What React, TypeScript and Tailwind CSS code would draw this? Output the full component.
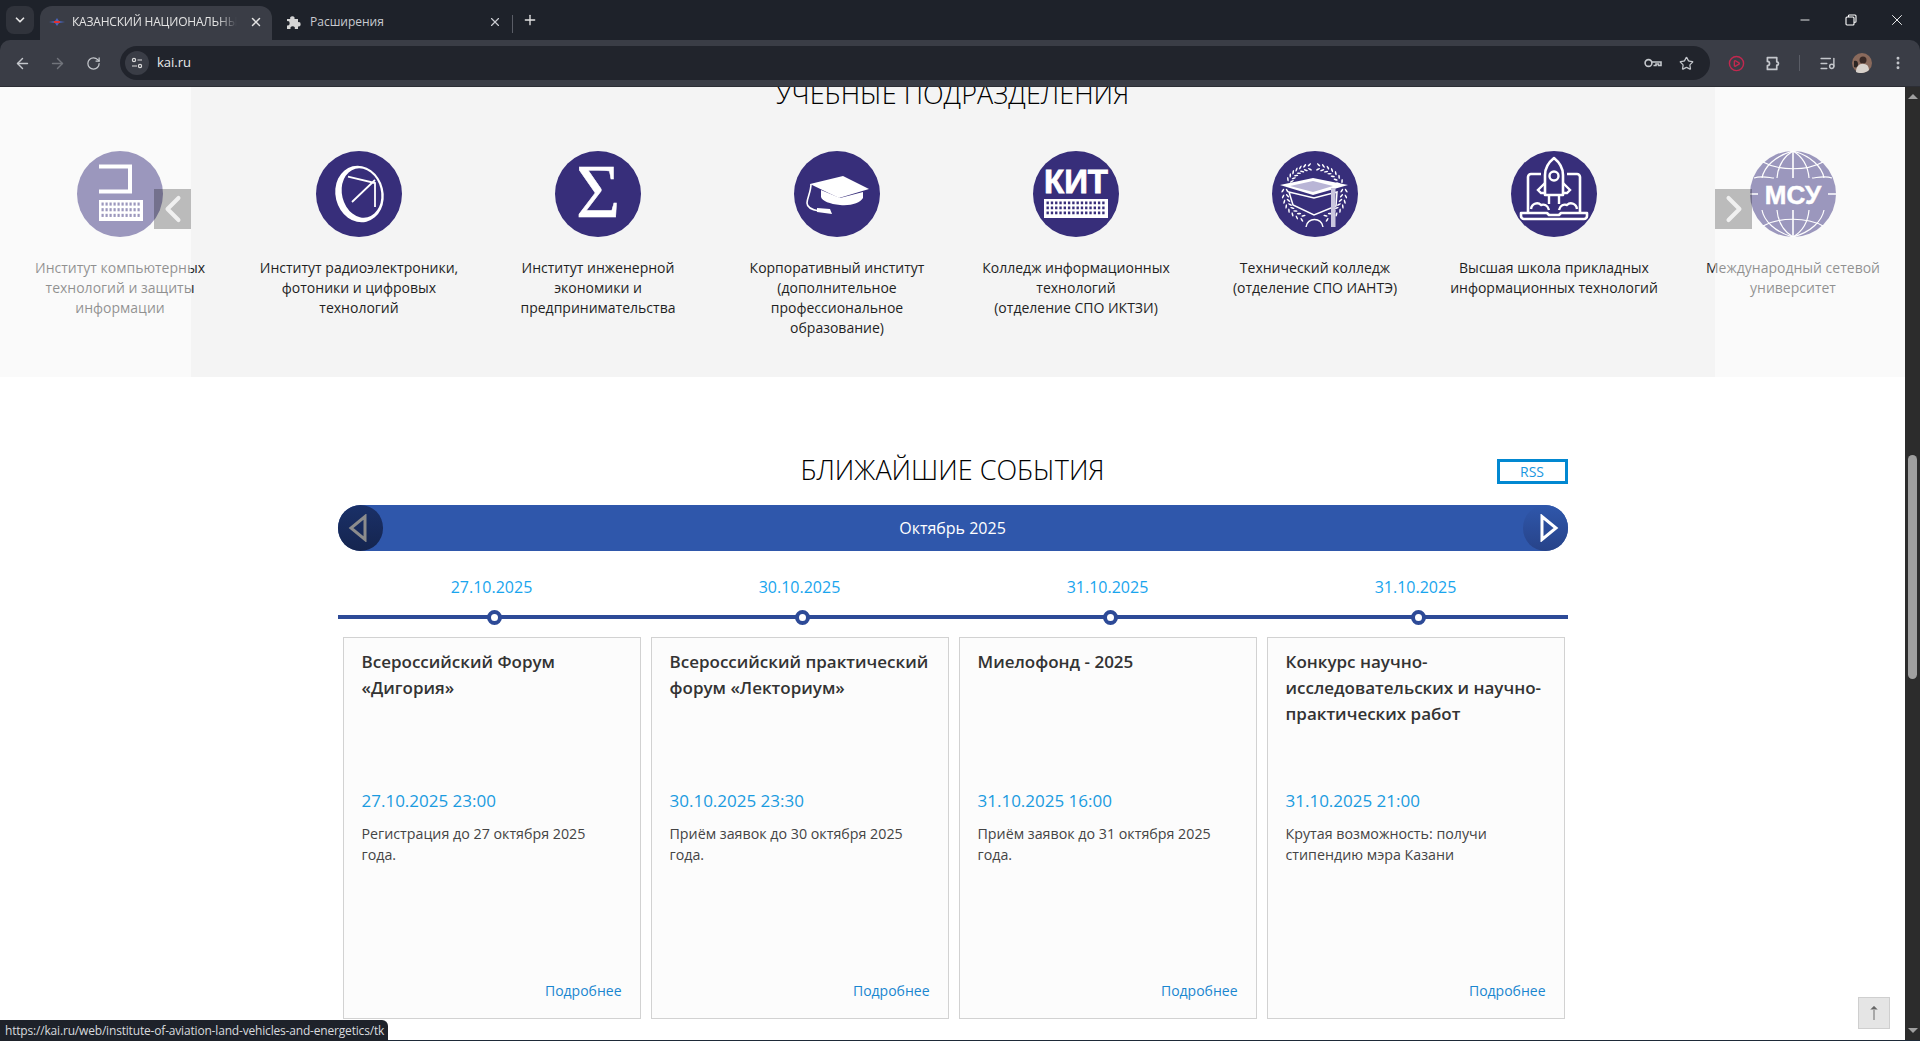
import React from "react";
import {
  ArrowLeft,
  ArrowRight,
  ChevronDown,
  ChevronLeft,
  ChevronRight,
  CirclePlay,
  EllipsisVertical,
  ListMusic,
  Minus,
  Plus,
  RotateCw,
  Star,
  X,
} from "lucide-react";

function KeyboardGrid({ x, y, w, h, rows, cols }: { x: number; y: number; w: number; h: number; rows: number; cols: number }) {
  const cells = [];
  const cw = (w - 4) / cols;
  const ch = (h - 4) / rows;
  for (let r = 0; r < rows; r++) {
    for (let c = 0; c < cols; c++) {
      cells.push(<rect key={`${r}-${c}`} x={x + 2.5 + c * cw} y={y + 2.5 + r * ch} width={cw * 0.55} height={ch * 0.55} fill="#372e7a" />);
    }
  }
  return (
    <g>
      <rect x={x} y={y} width={w} height={h} fill="#fff" />
      {cells}
    </g>
  );
}

// leaves of the wreath, set in pairs along a curve
function Leaves({ from, ctrl, to, n }: { from: number[]; ctrl: number[]; to: number[]; n: number }) {
  const items = [];
  for (let i = 0; i <= n; i++) {
    const t = i / n;
    const u = 1 - t;
    const px = u * u * from[0] + 2 * u * t * ctrl[0] + t * t * to[0];
    const py = u * u * from[1] + 2 * u * t * ctrl[1] + t * t * to[1];
    const dx = 2 * u * (ctrl[0] - from[0]) + 2 * t * (to[0] - ctrl[0]);
    const dy = 2 * u * (ctrl[1] - from[1]) + 2 * t * (to[1] - ctrl[1]);
    const angle = (Math.atan2(dy, dx) * 180) / Math.PI;
    items.push(
      <g key={i} transform={`translate(${px} ${py}) rotate(${angle})`}>
        <ellipse cx="1" cy="-2" rx="2.2" ry="0.8" transform="rotate(-35)" fill="#fff" />
        <ellipse cx="1" cy="2" rx="2.2" ry="0.8" transform="rotate(35)" fill="#fff" />
      </g>
    );
  }
  return <g>{items}</g>;
}

function Circle({ children }: { children: React.ReactNode }) {
  return (
    <svg width="86" height="86" viewBox="0 0 86 86" className="mx-auto block">
      <circle cx="43" cy="43" r="43" fill="#372e7a" />
      {children}
    </svg>
  );
}

const icons: React.ReactNode[] = [
  <Circle key="a">
    <path d="M22 15.5h31v25H22" fill="none" stroke="#fff" strokeWidth="4" />
    <KeyboardGrid x={22} y={49} w={44} h={21} rows={3} cols={10} />
  </Circle>,
  <Circle key="b">
    <ellipse cx="43.5" cy="43" rx="24" ry="28.5" transform="rotate(-14 43.5 43)" fill="#fff" />
    <ellipse cx="45.5" cy="42" rx="19.5" ry="25" transform="rotate(-14 45.5 42)" fill="#372e7a" />
    <path d="M32 25.500l27 6.500v24M36 51l23-22" fill="none" stroke="#fff" strokeWidth="1.8" />
  </Circle>,
  <Circle key="c">
    <text x="43" y="66" textAnchor="middle" fontFamily="'Liberation Serif', serif" fontSize="76" fill="#fff" stroke="#fff" strokeWidth="0.5">Σ</text>
  </Circle>,
  <Circle key="d">
    <path d="M16 33l33-8 26 13-30 9z" fill="#fff" />
    <path d="M27 39l19 8 23-6v6c-3 5-12 8-23 7-10-1-18-4-19-8z" fill="#fff" />
    <path d="M17 33c0 8-4 14-4 19 0 5 6 7 12 8" fill="none" stroke="#fff" strokeWidth="1.6" />
    <path d="M23 57l13 1 2 5-15-2z" fill="#fff" />
  </Circle>,
  <Circle key="e">
    <text x="43" y="42" textAnchor="middle" fontFamily="'Liberation Sans', sans-serif" fontWeight="700" fontSize="33" fill="#fff" stroke="#fff" strokeWidth="0.8">КИТ</text>
    <KeyboardGrid x={11} y={48} w={64} h={19} rows={3} cols={14} />
  </Circle>,
  <Circle key="f">
    <Leaves from={[18, 29]} ctrl={[24, 18]} to={[38, 16]} n={6} />
    <Leaves from={[68, 31]} ctrl={[60, 18]} to={[46, 16]} n={6} />
    <Leaves from={[13, 40]} ctrl={[13, 60]} to={[31, 67]} n={7} />
    <Leaves from={[72, 40]} ctrl={[72, 60]} to={[54, 67]} n={7} />
    <path d="M8 34l33-7 35 7-35 10z" fill="#fff" />
    <path d="M18 35l23-5 20 5-20 6z" fill="#b9b5d6" />
    <path d="M17 41l4 13 21 10 22-9 1-14-23 6z" fill="#372e7a" stroke="#fff" strokeWidth="1.5" />
    <rect x="59" y="37" width="4.500" height="39" fill="#c9c6de" />
    <path d="M34 76c1-10 16-10 17 0" fill="none" stroke="#fff" strokeWidth="1.4" />
  </Circle>,
  <Circle key="g">
    <path d="M30 23H20a3 3 0 0 0-3 3v37M56 23h10a3 3 0 0 1 3 3v37" fill="none" stroke="#fff" strokeWidth="2.6" />
    <path d="M10 62h26l2 2h10l2-2h26v3a3 3 0 0 1-3 3H13a3 3 0 0 1-3-3z" fill="none" stroke="#fff" strokeWidth="2.6" strokeLinejoin="round" />
    <path d="M43 7c5 4 9 9 9 17v20H34V24c0-8 4-13 9-17z" fill="#372e7a" stroke="#fff" strokeWidth="2.6" strokeLinejoin="round" />
    <circle cx="43" cy="25" r="4.5" fill="none" stroke="#fff" strokeWidth="2.4" />
    <path d="M34 32l-7 7 3 3h4M52 32l7 7-3 3h-4M38 45v8M48 45v8" fill="none" stroke="#fff" strokeWidth="2.4" />
    <path d="M20 58c1-6 7-7 10-4 3-1 7 0 8 5M66 58c-1-6-7-7-10-4-3-1-7 0-8 5" fill="none" stroke="#fff" strokeWidth="2.4" />
  </Circle>,
  <Circle key="h">
    <g fill="none" stroke="#fff" strokeWidth="1.2">
      <path d="M43 0v27M43 59v27M0 43h8M78 43h8" strokeWidth="1.6" />
      <path d="M43 0c-10 6-15 15-16 27M43 0c10 6 15 15 16 27M43 86c-10-6-15-15-16-27M43 86c10-6 15-15 16-27" />
      <path d="M43 0C25 5 14 16 12 27M43 0c18 5 29 16 31 27M43 86C25 81 14 70 12 59M43 86c18-5 29-16 31-27" />
      <path d="M13 11c16 9 44 9 60 0M13 75c16-9 44-9 60 0" />
      <path d="M4 27c8-3 16 0 20 0M82 27c-8-3-16 0-20 0" />
    </g>
    <text x="43" y="53" textAnchor="middle" fontFamily="'Liberation Sans', sans-serif" fontWeight="700" fontSize="26" fill="#fff" stroke="#fff" strokeWidth="0.5">МСУ</text>
  </Circle>,
];

const units = [
  ["Институт компьютерных", "технологий и защиты", "информации"],
  ["Институт радиоэлектроники,", "фотоники и цифровых", "технологий"],
  ["Институт инженерной", "экономики и", "предпринимательства"],
  ["Корпоративный институт", "(дополнительное", "профессиональное", "образование)"],
  ["Колледж информационных", "технологий", "(отделение СПО ИКТЗИ)"],
  ["Технический колледж", "(отделение СПО ИАНТЭ)"],
  ["Высшая школа прикладных", "информационных технологий"],
  ["Международный сетевой", "университет"],
];

const events = [
  {
    day: "27.10.2025",
    title: ["Всероссийский Форум", "«Дигория»"],
    date: "27.10.2025 23:00",
    text: ["Регистрация до 27 октября 2025", "года."],
  },
  {
    day: "30.10.2025",
    title: ["Всероссийский практический", "форум «Лекториум»"],
    date: "30.10.2025 23:30",
    text: ["Приём заявок до 30 октября 2025", "года."],
  },
  {
    day: "31.10.2025",
    title: ["Миелофонд - 2025"],
    date: "31.10.2025 16:00",
    text: ["Приём заявок до 31 октября 2025", "года."],
  },
  {
    day: "31.10.2025",
    title: ["Конкурс научно-", "исследовательских и научно-", "практических работ"],
    date: "31.10.2025 21:00",
    text: ["Крутая возможность: получи", "стипендию мэра Казани"],
  },
];

function BrowserChrome() {
  return (
    <div className="h-[87px] shrink-0 bg-[#1e222a] text-[#e3e3e3] font-['Open_Sans',sans-serif]">
      <div className="flex h-10 items-end pl-[6px]">
        <div className="mb-[6px] flex h-7 w-[28px] items-center justify-center rounded-lg bg-[#30333b]">
          <ChevronDown size={14} strokeWidth={3} />
        </div>
        <div className="ml-[6px] flex h-[34px] w-[232px] items-center rounded-t-xl bg-[#3a3d46] pb-[2px] pl-[9px] pr-[9px]">
          <svg width="16" height="8" viewBox="0 0 16 8" className="shrink-0">
            <path d="M0 4l6-1 2-3 2 3 6 1-6 1-2 3-2-3z" fill="#4a63b8" />
            <path d="M5 4h6" stroke="#d33" strokeWidth="2" />
          </svg>
          <div className="ml-[7px] w-[165px] overflow-hidden whitespace-nowrap text-[12px] tracking-[-0.2px] [mask-image:linear-gradient(to_right,black_88%,transparent)]">
            КАЗАНСКИЙ НАЦИОНАЛЬНЫЙ
          </div>
          <X size={14} strokeWidth={2.5} className="ml-auto" />
        </div>
        <div className="flex h-[34px] w-[240px] items-center pb-[2px] pl-[14px] pr-[10px]">
          <svg width="15" height="15" viewBox="0 0 15 15" fill="#d5d5d5">
            <path d="M1 4h3.2a2.2 2.2 0 1 1 4.3 0H12v3.2a2.2 2.2 0 1 1 0 4.3V14H8.8a2.2 2.2 0 1 0-4.3 0H1v-3.500a2.2 2.2 0 1 0 0-4.3z" />
          </svg>
          <span className="ml-[9px] text-[12px] text-[#c9cbd0]">Расширения</span>
          <X size={14} strokeWidth={2} className="ml-auto text-[#c9cbd0]" />
        </div>
        <div className="mb-[7px] h-[18px] w-px bg-[#5a5d66]" />
        <Plus size={16} strokeWidth={2} className="mb-[12px] ml-[9px]" />
        <div className="ml-auto flex h-10 items-center text-white">
          <Minus size={14} strokeWidth={1.5} className="mr-[33px]" />
          <svg width="12" height="12" viewBox="0 0 12 12" className="mr-[31px]" fill="none" stroke="currentColor" strokeWidth="1.1">
            <rect x="1" y="3" width="8" height="8" rx="1" />
            <path d="M3.5 3V1.5a.8.8 0 0 1 .8-.5H10a1 1 0 0 1 1 1v5.5a.8.8 0 0 1-.8.8H9" />
          </svg>
          <X size={18} strokeWidth={1.2} className="mr-[14px]" />
        </div>
      </div>
      <div className="flex h-[47px] items-center rounded-t-[10px] border-b border-[#2c2e35] bg-[#3a3d46]">
        <ArrowLeft size={17} strokeWidth={2} className="ml-[14px] text-[#c4c7cc]" />
        <ArrowRight size={17} strokeWidth={2} className="ml-[18px] text-[#71747b]" />
        <RotateCw size={15} strokeWidth={2} className="ml-[20px] text-[#c4c7cc]" />
        <div className="ml-[19px] flex h-[34px] w-[1590px] items-center rounded-full bg-[#21242c] pl-[5px] pr-[16px]">
          <div className="flex h-6 w-6 items-center justify-center rounded-full bg-[#3a3d46]">
            <svg width="12" height="12" viewBox="0 0 12 12" fill="none" stroke="#dcdcdc" strokeWidth="1.2">
              <circle cx="3" cy="3" r="1.6" />
              <path d="M6.5 3H11M1 9h5" />
              <circle cx="9" cy="9" r="1.6" />
            </svg>
          </div>
          <span className="ml-[8px] text-[13px] text-[#e8eaed]">kai.ru</span>
          <svg width="18" height="10" viewBox="0 0 18 10" className="ml-auto" fill="none" stroke="#c4c7cc" strokeWidth="1.6">
            <circle cx="4.5" cy="5" r="3.4" />
            <path d="M8 4h9v3.5h-2.5V6H12v1.5H9.5" />
          </svg>
          <Star size={15} strokeWidth={2} className="ml-[17px] text-[#c4c7cc]" />
        </div>
        <CirclePlay size={17} strokeWidth={2} className="ml-[18px] text-[#c2284f]" />
        <svg width="17" height="17" viewBox="0 0 20 20" className="ml-[19px]" fill="none" stroke="#c4c7cc" strokeWidth="2" strokeLinejoin="round">
          <path d="M4 3h11v5a2 2 0 0 1 0 4v5H4v-4.500a2.500 2.500 0 0 0 0-5z" />
        </svg>
        <div className="ml-[18px] h-[16px] w-px bg-[#5a5d66]" />
        <ListMusic size={17} strokeWidth={2} className="ml-[19px] text-[#c4c7cc]" />
        <svg width="20" height="20" viewBox="0 0 20 20" className="ml-[16px]">
          <circle cx="10" cy="10" r="10" fill="#8a6a5c" />
          <circle cx="11" cy="7" r="3.5" fill="#3a2a26" />
          <path d="M4 19c0-6 4-9 8-8 4 0 5 4 5 6-3 3-9 4-13 2z" fill="#d8d2cc" />
          <path d="M2 8c2-1 4 0 4 3s-2 4-4 3z" fill="#2b2523" />
        </svg>
        <EllipsisVertical size={16} strokeWidth={2.4} className="ml-[18px] text-[#c4c7cc]" />
      </div>
    </div>
  );
}

function Units() {
  return (
    <section className="relative h-[290px] overflow-hidden bg-[#f4f4f4]">
      <h2 className="-mt-[11px] text-center text-[27px] font-light leading-9 text-black">УЧЕБНЫЕ ПОДРАЗДЕЛЕНИЯ</h2>
      <div className="mt-[39px] ml-[0.5px] flex">
        {units.map((lines, i) => (
          <div key={i} className="w-[239px] shrink-0">
            {icons[i]}
            <div className="mt-[21px] whitespace-nowrap text-center text-[14px] leading-5 text-[#1f1f1f]">
              {lines.map((line) => (
                <div key={line}>{line}</div>
              ))}
            </div>
          </div>
        ))}
      </div>
      <div className="absolute inset-y-0 left-0 w-[191px] bg-white/50" />
      <div className="absolute inset-y-0 right-0 w-[190px] bg-white/50" />
      <div className="absolute left-[154px] top-[102px] flex h-10 w-[37px] items-center justify-center bg-black/25">
        <ChevronLeft size={44} strokeWidth={2.2} className="shrink-0 text-[#f0f0f0]" />
      </div>
      <div className="absolute right-[153px] top-[102px] flex h-10 w-[37px] items-center justify-center bg-black/25">
        <ChevronRight size={44} strokeWidth={2.2} className="shrink-0 text-[#f0f0f0]" />
      </div>
    </section>
  );
}

function Events() {
  return (
    <section className="bg-white pt-[75px]">
      <div className="mx-auto w-[1230px]">
        <div className="grid grid-cols-[1fr_auto_1fr]">
          <div />
          <h2 className="text-center text-[27px] font-light leading-9 text-black">БЛИЖАЙШИЕ СОБЫТИЯ</h2>
          <div className="mt-[7px] flex h-[25px] w-[71px] items-center justify-center justify-self-end border-[3px] border-[#0288d1] text-[14px] text-[#1a96e0]">
            RSS
          </div>
        </div>
        <div className="mt-[17px] flex h-[46px] items-center justify-between rounded-[23px] bg-[#2f57ab] text-[16px] text-white">
          <div className="flex h-[46px] w-[45px] items-center justify-center rounded-full bg-gradient-to-b from-[#1a3068] to-[#15254f] pr-[5px]">
            <svg width="20" height="28" viewBox="0 0 20 28" fill="none" stroke="#8c8c8c" strokeWidth="3">
              <path d="M17 2.500v23L3 14z" />
            </svg>
          </div>
          <span>Октябрь 2025</span>
          <div className="flex h-[46px] w-[45px] items-center justify-center rounded-full bg-gradient-to-b from-[#2f57ab] to-[#274389] pl-[7px]">
            <svg width="20" height="28" viewBox="0 0 20 28" fill="none" stroke="#fff" strokeWidth="3">
              <path d="M3 2.500v23L17 14z" />
            </svg>
          </div>
        </div>
        <div className="mt-[26px] flex">
          {events.map((ev, i) => (
            <div key={i} className="w-[308px] shrink-0 text-center text-[16px] leading-5 text-[#19a5ee]">
              {ev.day}
            </div>
          ))}
        </div>
        <div className="relative mt-[13px] flex h-[15px]">
          <div className="absolute inset-x-0 top-[5px] h-1 bg-[#2d4a97]" />
          {events.map((ev, i) => (
            <div key={i} className="relative flex w-[308px] shrink-0 justify-center pl-[6px]">
              <div className="h-[15px] w-[15px] rounded-full border-[4px] border-[#2d4a97] bg-white" />
            </div>
          ))}
        </div>
        <div className="mt-[12px] flex gap-[10px] pl-[5px]">
          {events.map((ev, i) => (
            <div key={i} className="flex h-[382px] w-[298px] shrink-0 flex-col border border-[#d2d2d2] bg-[#fcfcfc] px-[18px] pt-[11px] pb-[17px]">
              <div className="h-[140px] text-[17px] font-semibold leading-[26px] text-[#333]">
                {ev.title.map((line) => (
                  <div key={line} className="whitespace-nowrap">{line}</div>
                ))}
              </div>
              <div className="text-[17px] leading-6 text-[#1a9be0]">{ev.date}</div>
              <div className="mt-[10px] text-[14.25px] leading-[21px] text-[#444]">
                {ev.text.map((line) => (
                  <div key={line} className="whitespace-nowrap">{line}</div>
                ))}
              </div>
              <a className="mt-auto text-right text-[14px] leading-5 text-[#1a86d0]">Подробнее</a>
            </div>
          ))}
        </div>
      </div>
    </section>
  );
}

function Scrollbar() {
  return (
    <div className="flex w-[15px] shrink-0 flex-col items-center bg-[#2c2c2c]">
      <div className="mt-[7px] h-0 w-0 border-x-[5px] border-b-[5px] border-x-transparent border-b-[#a0a0a0]" />
      <div className="mt-[356px] h-[224px] w-[9px] rounded-full bg-[#9f9f9f]" />
      <div className="mb-[7px] mt-auto h-0 w-0 border-x-[5px] border-t-[5px] border-x-transparent border-t-[#a0a0a0]" />
    </div>
  );
}

export default function App() {
  return (
    <div className="relative flex h-[1041px] w-[1920px] flex-col overflow-hidden bg-white font-['Open_Sans',sans-serif]">
      <BrowserChrome />
      <div className="flex min-h-0 flex-1">
        <main className="min-w-0 flex-1 overflow-hidden">
          <Units />
          <Events />
        </main>
        <Scrollbar />
      </div>
      <div className="h-px shrink-0 bg-[#1e2a38]" />
      <div className="absolute bottom-[12px] right-[30px] flex h-8 w-8 items-center justify-center border border-[#cfcfcf] bg-[#e5e5e5]">
        <svg width="10" height="14" viewBox="0 0 10 14">
          <path d="M5 0l4 4H6v10H4V4H1z" fill="#a8a8a8" />
          <path d="M5 0l3 3H2z" fill="#666" />
        </svg>
      </div>
      <div className="absolute bottom-0 left-0 flex h-[21px] w-[388px] items-center whitespace-nowrap rounded-tr-md bg-[#1e222a] pl-[5px] text-[12px] tracking-[-0.18px] text-[#d8dade]">
        https://kai.ru/web/institute-of-aviation-land-vehicles-and-energetics/tk
      </div>
    </div>
  );
}
